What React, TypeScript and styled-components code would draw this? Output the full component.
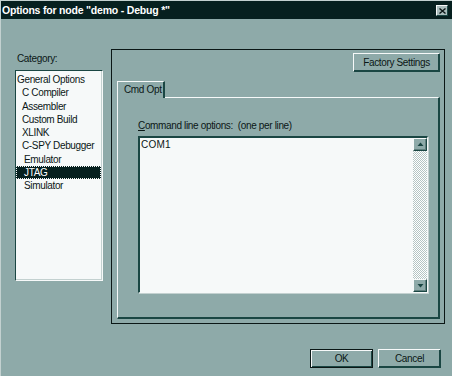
import React from "react";
import styled, { createGlobalStyle } from "styled-components";

const C = {
  face: "#8eaaa9",
  dark: "#06201f",
  shadow: "#1a4643",
  light: "#f6f9f9",
  mid: "#c3d1d0",
};

const Global = createGlobalStyle`
  html, body { margin: 0; padding: 0; background: ${C.face}; }
  body {
    font-family: "Liberation Sans", Arial, sans-serif;
    font-size: 10px;
    letter-spacing: -0.35px;
    color: #0b1716;
  }
`;

const Window = styled.div`
  width: 452px;
  height: 376px;
  box-sizing: border-box;
  background: ${C.face};
  border-top: 1px solid ${C.mid};
  border-left: 1px solid ${C.mid};
  display: flex;
  flex-direction: column;
  overflow: hidden;
`;

const TitleBar = styled.div`
  height: 18px;
  background: ${C.dark};
  display: flex;
  align-items: center;
  justify-content: space-between;
  padding: 0 4px 0 1px;
`;

const TitleText = styled.span`
  color: #ffffff;
  font-weight: bold;
  font-size: 10.5px;
  letter-spacing: -0.2px;
`;

const CloseButton = styled.button`
  width: 12px;
  height: 11px;
  padding: 0;
  margin-top: 1px;
  box-sizing: border-box;
  background: #a9bdbc;
  border: 1px solid;
  border-color: ${C.light} ${C.shadow} ${C.shadow} ${C.light};
  display: flex;
  align-items: center;
  justify-content: center;
`;

const Content = styled.div`
  display: flex;
  gap: 8px;
  padding: 30px 0 0 14px;
`;

const LeftColumn = styled.div`
  width: 88px;
  display: flex;
  flex-direction: column;
  padding-top: 3px;
`;

const Label = styled.div<{ $indent?: number }>`
  line-height: 13px;
  height: 13px;
  white-space: pre;
  padding-left: ${(p) => p.$indent ?? 0}px;
`;

const ListBox = styled.ul`
  list-style: none;
  margin: 5px 0 0;
  padding: 2px 0 0;
  height: 211px;
  box-sizing: border-box;
  background: ${C.light};
  border: 1px solid;
  border-color: ${C.shadow} ${C.light} ${C.light} ${C.shadow};
  box-shadow: inset -1px -1px 0 ${C.mid};
`;

const Item = styled.li<{ $level: number; $selected?: boolean }>`
  line-height: 13.25px;
  height: 13.25px;
  box-sizing: border-box;
  padding-left: ${(p) => (p.$level === 0 ? 1 : p.$level === 1 ? 6 : 8)}px;
  margin-right: 1px;
  white-space: nowrap;
  background: ${(p) => (p.$selected ? C.dark : "transparent")};
  color: ${(p) => (p.$selected ? "#ffffff" : "inherit")};
  outline: ${(p) => (p.$selected ? `1px dotted ${C.light}` : "none")};
  outline-offset: -1px;
`;

const Frame = styled.div`
  width: 334px;
  height: 275px;
  box-sizing: border-box;
  border: 1px solid #0b1716;
  padding: 3px 4px 4px 5px;
  display: flex;
  flex-direction: column;
`;

const TopBar = styled.div`
  display: flex;
  justify-content: flex-end;
`;

const Button = styled.button<{ $width: number; $default?: boolean }>`
  width: ${(p) => p.$width}px;
  height: 19px;
  box-sizing: border-box;
  padding: 0;
  font: inherit;
  letter-spacing: inherit;
  color: #0b1716;
  background: ${C.face};
  border: 1px solid;
  border-color: ${(p) =>
    p.$default
      ? "#0b1716"
      : `${C.light} ${C.shadow} ${C.shadow} ${C.light}`};
  box-shadow: ${(p) =>
    p.$default
      ? `inset 1px 1px 0 ${C.light}, inset -1px -1px 0 ${C.shadow}`
      : `inset -1px -1px 0 ${C.shadow}`};
`;

const TabStrip = styled.div`
  display: flex;
  margin-top: 9px;
  position: relative;
  z-index: 1;
`;

const Tab = styled.div`
  width: 48px;
  height: 17px;
  box-sizing: border-box;
  margin-bottom: -1px;
  background: ${C.face};
  border-top: 1px solid ${C.light};
  border-left: 1px solid ${C.light};
  border-right: 2px solid ${C.shadow};
  padding: 2px 0 0 6px;
  line-height: 12px;
  white-space: nowrap;
`;

const Panel = styled.div`
  flex: 1;
  box-sizing: border-box;
  border-top: 1px solid ${C.light};
  border-left: 1px solid ${C.light};
  border-right: 2px solid ${C.shadow};
  border-bottom: 2px solid ${C.shadow};
  padding: 21px 0 0 20px;
  display: flex;
  flex-direction: column;
`;

const TextArea = styled.div`
  margin-top: 4px;
  width: 290px;
  height: 157px;
  box-sizing: border-box;
  background: ${C.light};
  border-top: 2px solid ${C.shadow};
  border-left: 2px solid ${C.shadow};
  border-right: 1px solid ${C.light};
  border-bottom: 1px solid ${C.light};
  box-shadow: 1px 1px 0 ${C.mid};
  display: flex;
`;

const TextContent = styled.div`
  flex: 1;
  padding: 0 0 0 1px;
  line-height: 13px;
  letter-spacing: 0.2px;
`;

const ScrollBar = styled.div`
  width: 14px;
  display: flex;
  flex-direction: column;
`;

const ScrollButton = styled.div`
  height: 13px;
  box-sizing: border-box;
  background: ${C.face};
  border: 1px solid;
  border-color: ${C.light} ${C.shadow} ${C.shadow} ${C.light};
  box-shadow: inset -1px -1px 0 #5f7f7d;
  display: flex;
  align-items: center;
  justify-content: center;
`;

const ScrollTrack = styled.div`
  flex: 1;
  background: repeating-conic-gradient(#ffffff 0 25%, #b4c5c4 0 50%) 0 0 / 2px 2px;
`;

const ButtonRow = styled.div`
  display: flex;
  justify-content: flex-end;
  gap: 5px;
  padding-right: 11px;
  margin-top: 25px;
`;

const Arrow = ({ up }: { up?: boolean }) => (
  <svg width="7" height="5" viewBox="0 0 7 5">
    {up ? (
      <path d="M3.5 0.5 L6.5 4 L0.5 4 Z" fill={C.shadow} />
    ) : (
      <path d="M0.5 1 L6.5 1 L3.5 4.5 Z" fill={C.shadow} />
    )}
  </svg>
);

const categories: { name: string; level: number; selected?: boolean }[] = [
  { name: "General Options", level: 0 },
  { name: "C Compiler", level: 1 },
  { name: "Assembler", level: 1 },
  { name: "Custom Build", level: 1 },
  { name: "XLINK", level: 1 },
  { name: "C-SPY Debugger", level: 1 },
  { name: "Emulator", level: 2 },
  { name: "JTAG", level: 2, selected: true },
  { name: "Simulator", level: 2 },
];

export default function App() {
  return (
    <>
      <Global />
      <Window>
        <TitleBar>
          <TitleText>Options for node "demo - Debug *"</TitleText>
          <CloseButton aria-label="Close">
            <svg width="7" height="6" viewBox="0 0 7 6">
              <path d="M0.5 0.5 L6.5 5.5 M6.5 0.5 L0.5 5.5" stroke="#0b1716" strokeWidth="1.4" />
            </svg>
          </CloseButton>
        </TitleBar>
        <Content>
          <LeftColumn>
            <Label $indent={2}>Category:</Label>
            <ListBox>
              {categories.map((c) => (
                <Item key={c.name} $level={c.level} $selected={c.selected}>
                  {c.name}
                </Item>
              ))}
            </ListBox>
          </LeftColumn>
          <Frame>
            <TopBar>
              <Button $width={87}>Factory Settings</Button>
            </TopBar>
            <TabStrip>
              <Tab>Cmd Opt</Tab>
            </TabStrip>
            <Panel>
              <Label>
                <u>C</u>ommand line options:  (one per line)
              </Label>
              <TextArea>
                <TextContent>COM1</TextContent>
                <ScrollBar>
                  <ScrollButton>
                    <Arrow up />
                  </ScrollButton>
                  <ScrollTrack />
                  <ScrollButton>
                    <Arrow />
                  </ScrollButton>
                </ScrollBar>
              </TextArea>
            </Panel>
          </Frame>
        </Content>
        <ButtonRow>
          <Button $width={63} $default>
            OK
          </Button>
          <Button $width={63}>Cancel</Button>
        </ButtonRow>
      </Window>
    </>
  );
}
